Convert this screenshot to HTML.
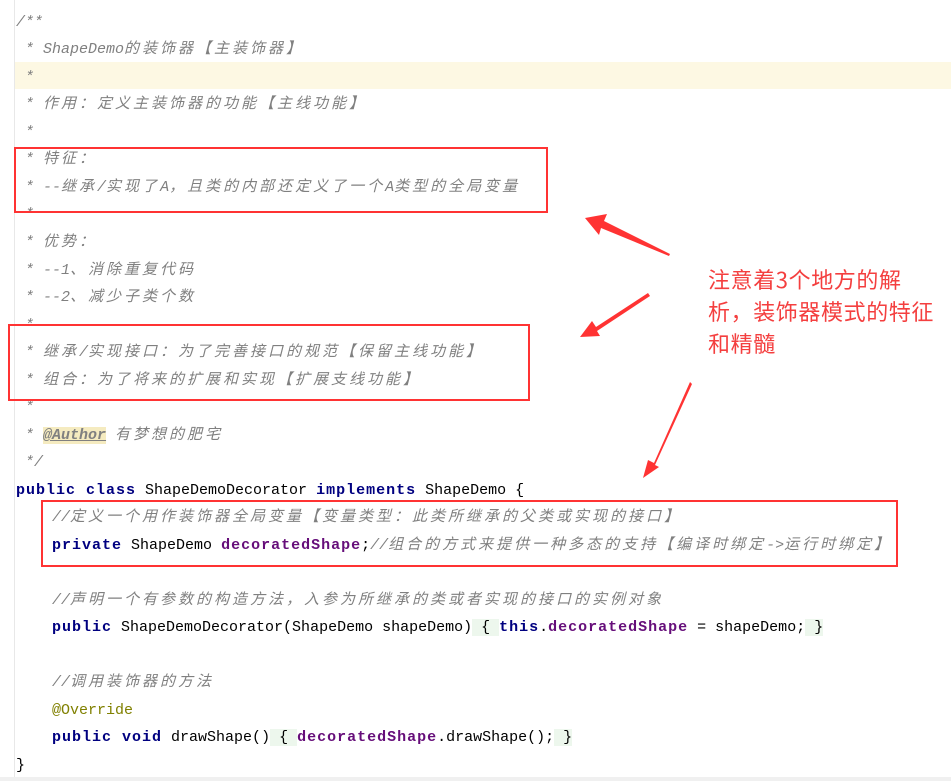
<!DOCTYPE html>
<html><head><meta charset="utf-8"><style>
html,body{margin:0;padding:0;background:#fff;width:951px;height:781px;overflow:hidden;position:relative}
.gut{position:absolute;left:0;top:0;width:14px;height:777px;background:#fff;border-right:1px solid #e8e8e8}
.hl{position:absolute;left:15px;top:62px;width:936px;height:27px;background:#fdf8e3}
.l{position:absolute;left:16px;height:27px;line-height:27px;font-family:"Liberation Mono","Noto Sans CJK SC",monospace;font-size:15px;color:#000;white-space:pre}
.c{letter-spacing:3px}
.cm{color:#808080;font-style:italic}
.k{color:#000080;font-weight:bold;letter-spacing:1px}
.f{color:#660e7a;font-weight:bold;letter-spacing:1px}
.an{color:#808000}
.au{background:#f5ebc0;text-decoration:underline;font-weight:bold;color:#808080}
.g{background:#edf7ed}
.box{position:absolute;border:2px solid #f33;box-sizing:border-box}
.note{position:absolute;left:708px;top:263px;color:#f43f3f;font-family:"Noto Sans CJK SC","WenQuanYi Zen Hei",sans-serif;font-size:22px;line-height:32px;white-space:nowrap;letter-spacing:0.6px}
.bot{position:absolute;left:0;top:777px;width:951px;height:4px;background:#f0f0f0}
</style></head><body>
<div class="gut"></div>
<div class="hl"></div>
<div class="l cm" style="top:9px">/**</div>
<div class="l cm" style="top:36px"> * ShapeDemo<span class="c">的装饰器【主装饰器】</span></div>
<div class="l cm" style="top:64px"> *</div>
<div class="l cm" style="top:91px"> * <span class="c">作用：定义主装饰器的功能【主线功能】</span></div>
<div class="l cm" style="top:119px"> *</div>
<div class="l cm" style="top:146px"> * <span class="c">特征：</span></div>
<div class="l cm" style="top:174px"> * --<span class="c">继承</span>/<span class="c">实现了</span>A<span class="c">，且类的内部还定义了一个</span>A<span class="c">类型的全局变量</span></div>
<div class="l cm" style="top:201px"> *</div>
<div class="l cm" style="top:229px"> * <span class="c">优势：</span></div>
<div class="l cm" style="top:257px"> * --1<span class="c">、消除重复代码</span></div>
<div class="l cm" style="top:284px"> * --2<span class="c">、减少子类个数</span></div>
<div class="l cm" style="top:312px"> *</div>
<div class="l cm" style="top:339px"> * <span class="c">继承</span>/<span class="c">实现接口：为了完善接口的规范【保留主线功能】</span></div>
<div class="l cm" style="top:367px"> * <span class="c">组合：为了将来的扩展和实现【扩展支线功能】</span></div>
<div class="l cm" style="top:394px"> *</div>
<div class="l cm" style="top:422px"> * <span class="au">@Author</span> <span class="c">有梦想的肥宅</span></div>
<div class="l cm" style="top:449px"> */</div>
<div class="l" style="top:477px"><span class="k">public class</span> ShapeDemoDecorator <span class="k">implements</span> ShapeDemo {</div>
<div class="l" style="top:504px">    <span class="cm">//<span class="c">定义一个用作装饰器全局变量【变量类型：此类所继承的父类或实现的接口】</span></span></div>
<div class="l" style="top:532px">    <span class="k">private</span> ShapeDemo <span class="f">decoratedShape</span>;<span class="cm">//<span class="c">组合的方式来提供一种多态的支持【编译时绑定</span>-&gt;<span class="c">运行时绑定】</span></span></div>
<div class="l" style="top:587px">    <span class="cm">//<span class="c">声明一个有参数的构造方法，入参为所继承的类或者实现的接口的实例对象</span></span></div>
<div class="l" style="top:614px">    <span class="k">public</span> ShapeDemoDecorator(ShapeDemo shapeDemo)<span class="g"> { </span><span class="k">this</span>.<span class="f">decoratedShape</span> = shapeDemo;<span class="g"> }</span></div>
<div class="l" style="top:669px">    <span class="cm">//<span class="c">调用装饰器的方法</span></span></div>
<div class="l" style="top:697px">    <span class="an">@Override</span></div>
<div class="l" style="top:724px">    <span class="k">public void</span> drawShape()<span class="g"> { </span><span class="f">decoratedShape</span>.drawShape();<span class="g"> }</span></div>
<div class="l" style="top:752px">}</div>

<div class="box" style="left:14px;top:147px;width:534px;height:66px"></div>
<div class="box" style="left:8px;top:324px;width:522px;height:77px"></div>
<div class="box" style="left:41px;top:500px;width:857px;height:67px"></div>

<svg style="position:absolute;left:0;top:0" width="951" height="781">
<g fill="#f33">
<polygon points="670,254 604,221 607,214 585,218 599,235 601,228 669,256"/>
<polygon points="648,293 596,327 592,321 580,337 600,336 597,331 650,296"/>
<polygon points="690,382 654,463 648,460 643,478 659,467 655,465 692,384"/>
</g>
</svg>
<div class="note">注意着3个地方的解<br>析，装饰器模式的特征<br>和精髓</div>
<div class="bot"></div>
</body></html>
